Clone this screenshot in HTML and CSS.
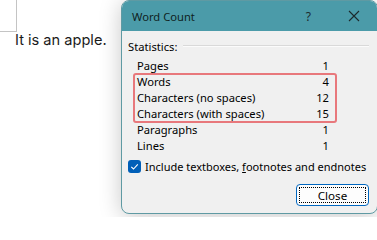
FILE: index.html
```html
<!DOCTYPE html>
<html>
<head>
<meta charset="utf-8">
<link rel="stylesheet" href="styles.css">
</head>
<body>
<div class="doc">
  <div class="corner"></div>
  <p class="text">It is an apple.</p>
</div>
<div class="dialog">
  <div class="titlebar">
    <span class="title">Word Count</span>
    <span class="help">?</span>
    <svg class="close-x" width="12" height="12" viewBox="0 0 12 12"><path d="M1 1 L11 11 M11 1 L1 11" stroke="#1c2a2d" stroke-width="1.1" fill="none"/></svg>
  </div>
  <div class="body">
    <div class="section">
      <span class="section-label">Statistics:</span>
      <span class="rule"></span>
    </div>
    <div class="stats">
      <div class="row"><span>Pages</span><span>1</span></div>
      <div class="group">
        <div class="row"><span>Words</span><span>4</span></div>
        <div class="row"><span>Characters (no spaces)</span><span>12</span></div>
        <div class="row"><span>Characters (with spaces)</span><span>15</span></div>
      </div>
      <div class="row"><span>Paragraphs</span><span>1</span></div>
      <div class="row"><span>Lines</span><span>1</span></div>
    </div>
    <label class="check">
      <span class="box"><svg width="13" height="13" viewBox="0 0 13 13"><path d="M3.3 6.8 L5.5 9 L9.8 4.3" stroke="#fff" stroke-width="1.1" fill="none"/></svg></span>
      <span>Include textboxes, <u>f</u>ootnotes and endnotes</span>
    </label>
    <div class="actions">
      <button class="btn"><span class="focus">Close</span></button>
    </div>
  </div>
</div>
</body>
</html>
```

FILE: styles.css
```css
html, body {
  margin: 0;
  padding: 0;
}
body {
  width: 377px;
  height: 217px;
  overflow: hidden;
  background: #ffffff;
  position: relative;
  font-family: "Noto Sans", "Open Sans", sans-serif;
}
.doc {
  display: flex;
  flex-direction: column;
}
.corner {
  box-sizing: border-box;
  width: 17px;
  height: 32px;
  border-right: 1px solid #c4c4c4;
  border-bottom: 1px solid #c4c4c4;
}
.text {
  margin: -1px 0 0 15px;
  font-family: "Inter", sans-serif;
  font-size: 14.6px;
  line-height: 18px;
  color: #1a1a1a;
}
.dialog {
  position: absolute;
  left: 121px;
  top: 0;
  width: 257px;
  height: 214px;
  box-sizing: border-box;
  border: 1px solid #5f9aa3;
  border-radius: 8px;
  background: #f0f0f0;
  overflow: hidden;
  box-shadow: 0 2px 22px rgba(0, 0, 0, 0.22);
  display: flex;
  flex-direction: column;
  font-size: 11.2px;
  color: #000;
}
.titlebar {
  height: 30px;
  background: #4b9ba9;
  display: flex;
  align-items: center;
  padding-left: 10px;
  flex-shrink: 0;
}
.title {
  color: #0f1f22;
  font-size: 11.2px;
  flex: 1;
}
.help {
  color: #1c2a2d;
  font-size: 12px;
  margin-right: 37px;
}
.close-x {
  margin-right: 17px;
}
.body {
  flex: 1;
  display: flex;
  flex-direction: column;
  padding: 7px 8px 0 6px;
}
.section {
  display: flex;
  align-items: center;
  height: 16px;
}
.section-label {
  margin-right: 6px;
}
.rule {
  flex: 1;
  height: 1px;
  background: #d9d9d9;
  border-bottom: 1px solid #fbfbfb;
}
.stats {
  display: flex;
  flex-direction: column;
  margin: 4px 0 0 6px;
  width: 202px;
}
.row {
  height: 16px;
  line-height: 16px;
  display: flex;
  justify-content: space-between;
  padding: 0 7px 0 3px;
}
.group {
  outline: 2px solid #e8787c;
  outline-offset: -1px;
  border-radius: 2px;
}
.check {
  display: flex;
  align-items: center;
  margin-top: 5px;
  height: 14px;
  white-space: nowrap;
  font-size: 11px;
}
.box {
  width: 13px;
  height: 13px;
  border-radius: 3px;
  background: #005fb8;
  margin-right: 4px;
  display: flex;
  flex-shrink: 0;
}
.actions {
  display: flex;
  justify-content: flex-end;
  margin-top: 11px;
}
.btn {
  width: 73px;
  height: 22px;
  box-sizing: border-box;
  border: 1px solid #0067c0;
  border-radius: 4px;
  background: #fdfdfd;
  padding: 2px;
  font-family: inherit;
  font-size: 11.6px;
  color: #000;
  display: flex;
}
.focus {
  flex: 1;
  border: 1px dotted #000;
  display: flex;
  align-items: center;
  justify-content: center;
}
```
